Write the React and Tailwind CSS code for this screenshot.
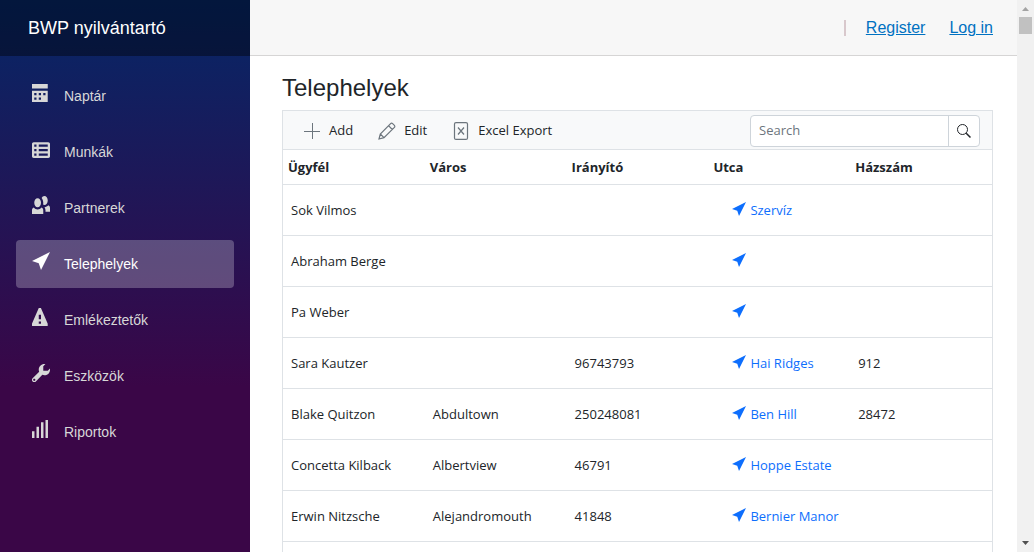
const ICONS = {
  calendar:
    "M0 0v2h7v-2h-7zm0 3v4.91c0 .05.04.09.09.09h6.81c.05 0 .09-.04.09-.09v-4.91h-7zm1 1h1v1h-1v-1zm2 0h1v1h-1v-1zm2 0h1v1h-1v-1zm-4 2h1v1h-1v-1zm2 0h1v1h-1v-1z",
  spreadsheet:
    "M.75 1c-.41 0-.75.34-.75.75v5.5c0 .41.34.75.75.75h6.5c.41 0 .75-.34.75-.75v-5.5c0-.41-.34-.75-.75-.75h-6.5zm.25 1h1v1h-1v-1zm2 0h4v1h-4v-1zm-2 2h1v1h-1v-1zm2 0h4v1h-4v-1zm-2 2h1v1h-1v-1zm2 0h4v1h-4v-1z",
  people:
    "M5.5 0c-.51 0-.95.35-1.22.88.45.54.72 1.28.72 2.13 0 .29-.03.55-.09.81.19.11.38.19.59.19.83 0 1.5-.9 1.5-2s-.67-2-1.5-2zm-3 1c-.83 0-1.5.9-1.5 2s.67 2 1.5 2 1.5-.9 1.5-2-.67-2-1.5-2zm4.75 3.16c-.43.51-1.02.82-1.69.84.27.38.44.84.44 1.34v.66h2v-1.66c0-.52-.31-.97-.75-1.19zm-6.5 1c-.44.22-.75.67-.75 1.19v1.66h5v-1.66c0-.52-.31-.97-.75-1.19-.45.53-1.06.84-1.75.84s-1.3-.32-1.75-.84z",
  location: "M8 0l-8 4 3 1 1 3 4-8z",
  warning:
    "M3.09 0c-.06 0-.1.04-.13.09l-2.94 6.81c-.02.05-.03.13-.03.19v.81c0 .05.04.09.09.09h6.81c.05 0 .09-.04.09-.09v-.81c0-.05-.01-.14-.03-.19l-2.94-6.81c-.02-.05-.07-.09-.13-.09h-.81zm-.09 3h1v2h-1v-2zm0 3h1v1h-1v-1z",
  wrench:
    "M5.5 0c-1.38 0-2.5 1.12-2.5 2.5 0 .32.08.62.19.91l-2.91 2.88c-.39.39-.39 1.05 0 1.44.2.2.46.28.72.28.26 0 .52-.09.72-.28l2.88-2.91c.28.11.58.19.91.19 1.38 0 2.5-1.12 2.5-2.5 0-.16 0-.32-.03-.47l-.97.97h-2v-2l.97-.97c-.15-.03-.31-.03-.47-.03zm-4.5 6.5c.28 0 .5.22.5.5s-.22.5-.5.5-.5-.22-.5-.5.22-.5.5-.5z",
  signal: "M6 0v8h1.100v-8h-1.100zm-2 1v7h1.100v-7h-1.100zm-2 2v5h1.100v-5h-1.100zm-2 2v3h1.100v-3h-1.100z",
};

const NAV = [
  { icon: "calendar", label: "Naptár" },
  { icon: "spreadsheet", label: "Munkák" },
  { icon: "people", label: "Partnerek" },
  { icon: "location", label: "Telephelyek", active: true },
  { icon: "warning", label: "Emlékeztetők" },
  { icon: "wrench", label: "Eszközök" },
  { icon: "signal", label: "Riportok" },
];

const COLUMNS = ["Ügyfél", "Város", "Irányító", "Utca", "Házszám"];

const ROWS = [
  ["Sok Vilmos", "", "", "Szervíz", ""],
  ["Abraham Berge", "", "", "", ""],
  ["Pa Weber", "", "", "", ""],
  ["Sara Kautzer", "", "96743793", "Hai Ridges", "912"],
  ["Blake Quitzon", "Abdultown", "250248081", "Ben Hill", "28472"],
  ["Concetta Kilback", "Albertview", "46791", "Hoppe Estate", ""],
  ["Erwin Nitzsche", "Alejandromouth", "41848", "Bernier Manor", ""],
];

function Icon({ name, className }) {
  return (
    <svg viewBox="0 0 8 8" fill="currentColor" aria-hidden="true" className={className}>
      <path d={ICONS[name]} />
    </svg>
  );
}

function Sidebar() {
  return (
    <aside className="flex w-[250px] shrink-0 flex-col bg-linear-[180deg,#052767_0%,#3a0647_70%]">
      <div className="flex h-14 shrink-0 items-center bg-black/40 px-7">
        <a href="#" className="text-lg text-white">BWP nyilvántartó</a>
      </div>
      <nav className="flex flex-col gap-2 p-4">
        {NAV.map(({ icon, label, active }) => (
          <a
            key={label}
            href="#"
            aria-current={active ? "page" : undefined}
            className={
              active
                ? "flex h-12 items-start gap-3.5 rounded bg-white/25 px-4 py-3 text-white"
                : "flex h-12 items-start gap-3.5 rounded px-4 py-3 text-[#d7d7d7]"
            }
          >
            <Icon name={icon} className="size-[18px] shrink-0" />
            <span className="text-sm leading-6">{label}</span>
          </a>
        ))}
      </nav>
    </aside>
  );
}

function ToolButton({ label, children }) {
  return (
    <button type="button" className="flex items-center gap-2 text-[#212529]">
      {children}
      {label}
    </button>
  );
}

function Toolbar() {
  return (
    <div className="flex h-[39px] items-center border-b border-[#dee2e6] bg-[#f8f9fa] pt-0.5 pr-3 pl-5">
      <div className="flex grow items-center gap-[25px]">
        <ToolButton label="Add">
          <svg viewBox="0 0 18 18" fill="none" stroke="#6c757d" className="size-[18px]" aria-hidden="true">
            <path d="M9.500 1v16M1 9.500h16" />
          </svg>
        </ToolButton>
        <ToolButton label="Edit">
          <svg viewBox="0 0 18 18" fill="none" stroke="#6c757d" strokeWidth="1.200" className="size-[18px]" aria-hidden="true">
            <path d="M1 17l1.300-5L12.600 1.600a1.400 1.400 0 0 1 2 0l1.800 1.800a1.400 1.400 0 0 1 0 2L6 15.700zM2.300 12l3.700 3.700M10.500 3.700l3.800 3.800" />
          </svg>
        </ToolButton>
        <ToolButton label="Excel Export">
          <svg viewBox="0 0 18 18" fill="none" stroke="#6c757d" strokeWidth="1.200" className="size-[18px]" aria-hidden="true">
            <rect x="2.500" y=".6" width="13" height="16.800" rx="1.500" />
            <path d="M6 5.500l6 7M12 5.500l-6 7" />
          </svg>
        </ToolButton>
      </div>
      <div className="flex h-8 w-[230px] overflow-hidden rounded border border-[#ced4da] bg-white">
        <input
          type="text"
          aria-label="Search"
          placeholder="Search"
          className="min-w-0 grow px-2 outline-none placeholder:text-[#6c757d]"
        />
        <button
          type="button"
          aria-label="Search"
          className="flex w-[31px] shrink-0 items-center justify-center border-l border-[#ced4da] text-[#212529]"
        >
          <svg viewBox="0 0 16 16" fill="none" stroke="currentColor" className="size-4" aria-hidden="true">
            <circle cx="6.500" cy="6.500" r="5" />
            <path d="M10.200 10.200l4.300 4.300" strokeWidth="1.500" />
          </svg>
        </button>
      </div>
    </div>
  );
}

function Grid() {
  return (
    <section className="border border-[#dee2e6] font-['Open_Sans',sans-serif] text-[13px] text-[#212529]">
      <Toolbar />
      <table className="w-full table-fixed border-separate border-spacing-0">
        <thead>
          <tr className="h-[35px]">
            {COLUMNS.map((name) => (
              <th key={name} className="border-b border-[#dee2e6] px-[5px] pt-0.5 text-left font-bold">{name}</th>
            ))}
          </tr>
        </thead>
        <tbody className="[&_td]:border-b [&_td]:border-[#dee2e6] [&_td]:pt-0.5 [&_td]:whitespace-nowrap">
          {ROWS.map(([client, city, zip, street, number]) => (
            <tr key={client} className="h-[51px]">
              <td className="px-2">{client}</td>
              <td className="px-2">{city}</td>
              <td className="px-2">{zip}</td>
              <td className="pl-6">
                <a href="#" aria-label={street || "Location"} className="flex items-center gap-1 text-[#0d6efd]">
                  <Icon name="location" className="mb-1 size-[14px] shrink-0" />
                  {street}
                </a>
              </td>
              <td className="px-2">{number}</td>
            </tr>
          ))}
          <tr className="h-[51px]">
            <td colSpan={5} />
          </tr>
        </tbody>
      </table>
    </section>
  );
}

function Scrollbar() {
  return (
    <div aria-hidden="true" className="flex w-[17px] shrink-0 flex-col items-center bg-[#f1f1f1]">
      <svg viewBox="0 0 17 17" className="size-[17px] shrink-0" fill="#a3a3a3">
        <path d="M5 11h7L8.500 7z" />
      </svg>
      <div className="h-[17px] w-[13px] bg-[#c1c1c1]" />
      <div className="grow" />
      <svg viewBox="0 0 17 17" className="size-[17px] shrink-0" fill="#505050">
        <path d="M5 6h7L8.500 10z" />
      </svg>
    </div>
  );
}

export default function App() {
  return (
    <div className="flex h-screen overflow-hidden bg-white font-['Liberation_Sans',sans-serif] text-[#212529]">
      <Sidebar />
      <div className="flex min-w-0 grow flex-col">
        <header className="flex h-14 shrink-0 items-center justify-end gap-5 border-b border-[#d6d5d5] bg-[#f7f7f7] px-6 text-base text-[#0071c1]">
          <span className="h-4 w-0.5 bg-[#d8c8cc]" />
          <div className="flex gap-6">
            <a href="#" className="underline">Register</a>
            <a href="#" className="underline">Log in</a>
          </div>
        </header>
        <main className="min-h-0 grow overflow-hidden pt-[18px] pr-6 pl-8">
          <h1 className="mb-2 text-2xl leading-7">Telephelyek</h1>
          <Grid />
        </main>
      </div>
      <Scrollbar />
    </div>
  );
}
